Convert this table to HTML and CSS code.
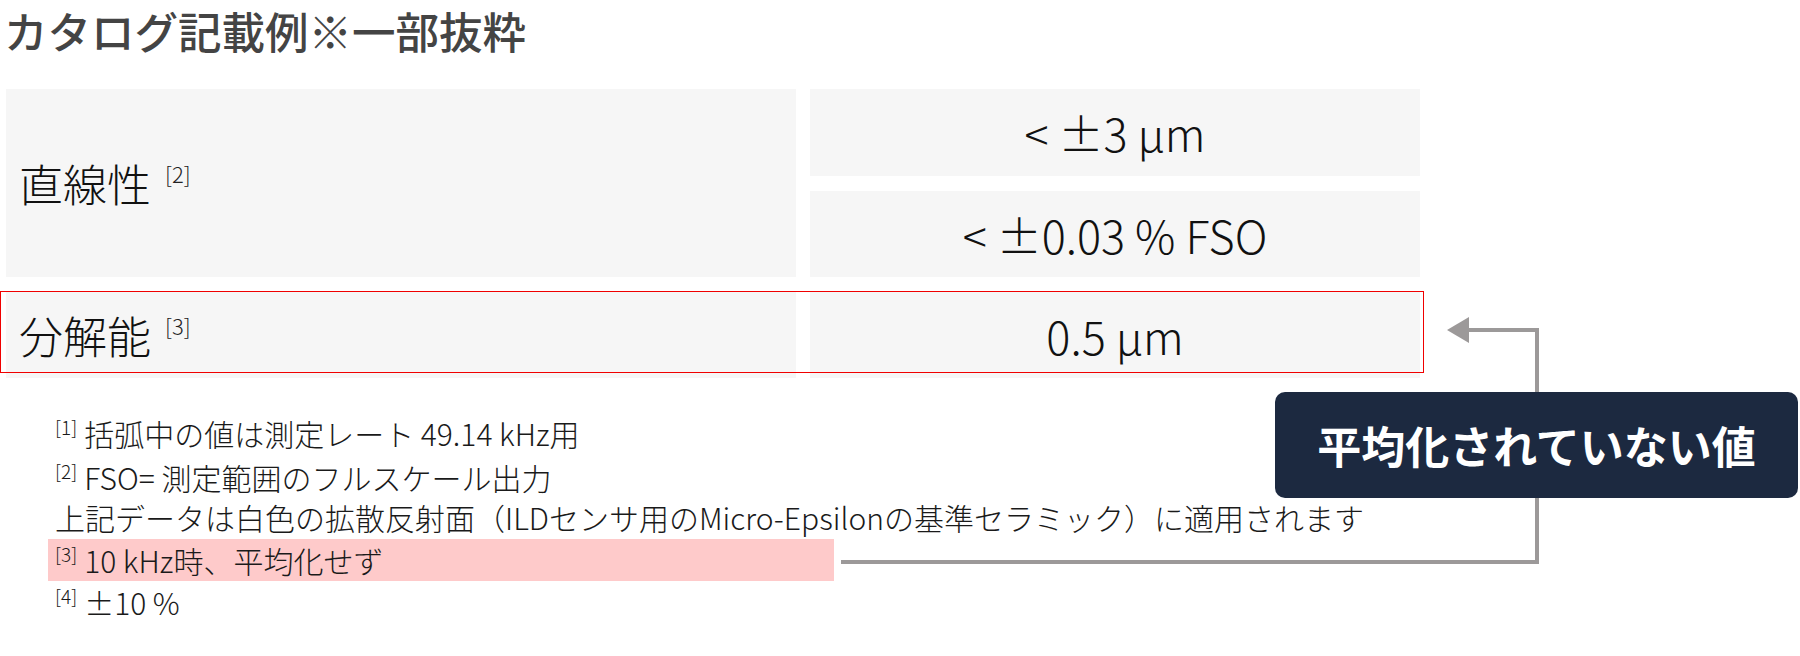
FILE: index.html
```html
<!DOCTYPE html>
<html lang="ja">
<head>
<meta charset="utf-8">
<title>カタログ記載例</title>
<link rel="stylesheet" href="styles.css">
</head>
<body>
<div class="page">
  <h1 class="title">カタログ記載例※一部抜粋</h1>

  <div class="spec">
    <div class="cell label span2">直線性<span class="ref">[2]</span></div>
    <div class="cell value">&lt; ±3 µm</div>
    <div class="cell value">&lt; ±0.03 % FSO</div>
    <div class="cell label">分解能<span class="ref">[3]</span></div>
    <div class="cell value">0.5 µm</div>
    <div class="highlight"></div>
  </div>

  <div class="notes">
    <p class="note first"><span class="mark">[1]</span>括弧中の値は測定レート 49.14 kHz用</p>
    <p class="note second"><span class="mark">[2]</span>FSO= 測定範囲のフルスケール出力</p>
    <p class="note">上記データは白色の拡散反射面（ILDセンサ用のMicro-Epsilonの基準セラミック）に適用されます</p>
    <p class="note marked"><span class="mark">[3]</span>10 kHz時、平均化せず</p>
    <p class="note"><span class="mark">[4]</span>±10 %</p>
  </div>

  <svg class="connector" width="1800" height="656" viewBox="0 0 1800 656" aria-hidden="true">
    <path d="M841 562 H1537 V330 H1466" fill="none" stroke="#9c9999" stroke-width="4"/>
    <polygon points="1447,330 1469,317 1469,343" fill="#9c9999"/>
  </svg>

  <div class="callout">平均化されていない値</div>
</div>
</body>
</html>
```

FILE: styles.css
```css
* { box-sizing: border-box; }

html, body {
  margin: 0;
  padding: 0;
  background: #ffffff;
}

body {
  font-family: "Noto Sans CJK JP", "Noto Sans", sans-serif;
  color: #1a1a1a;
  width: 1800px;
  height: 656px;
  overflow: hidden;
}

.page {
  position: relative;
  width: 1800px;
  height: 656px;
}

.title {
  margin: 0;
  padding: 6px 0 0 4px;
  font-size: 43.5px;
  line-height: 50px;
  font-weight: 500;
  color: #444444;
  letter-spacing: 0;
}

.spec {
  position: relative;
  margin: 33px 0 0 6px;
  display: grid;
  grid-template-columns: 790px 610px;
  grid-template-rows: 87px 86px 86px;
  column-gap: 14px;
  row-gap: 15px;
  width: 1414px;
}

.cell {
  background: #f6f6f6;
  display: flex;
  align-items: center;
}

.span2 {
  grid-row: 1 / 3;
}

.label {
  padding-left: 13px;
  font-size: 44px;
  color: #111111;
  font-weight: 300;
}

.ref {
  font-size: 22px;
  margin-left: 14px;
  position: relative;
  top: -10px;
  color: #222222;
  font-weight: 300;
}

.value {
  justify-content: center;
  font-size: 45px;
  color: #111111;
  font-weight: 300;
}

.highlight {
  position: absolute;
  left: -6px;
  top: 202px;
  width: 1424px;
  height: 82px;
  border: 1.5px solid #f00000;
  pointer-events: none;
}

.notes {
  margin: 35px 0 0 48px;
  font-size: 30px;
  line-height: 40px;
  color: #1a1a1a;
  font-weight: 300;
}

.note {
  margin: 0;
  padding-left: 7px;
  white-space: nowrap;
}

.note.second {
  margin-top: 4px;
}

.note.marked {
  width: 786px;
  height: 42px;
  line-height: 42px;
  background: #fecaca;
  margin-top: 2px;
  margin-bottom: 1px;
}

.mark {
  font-size: 19px;
  vertical-align: 11px;
  margin-right: 7px;
  line-height: 1;
}

.connector {
  position: absolute;
  left: 0;
  top: 0;
  pointer-events: none;
}

.callout {
  position: absolute;
  left: 1275px;
  top: 392px;
  width: 523px;
  height: 106px;
  border-radius: 10px;
  background: #1c2940;
  color: #ffffff;
  font-size: 44px;
  font-weight: 700;
  display: flex;
  align-items: center;
  justify-content: center;
}
```
